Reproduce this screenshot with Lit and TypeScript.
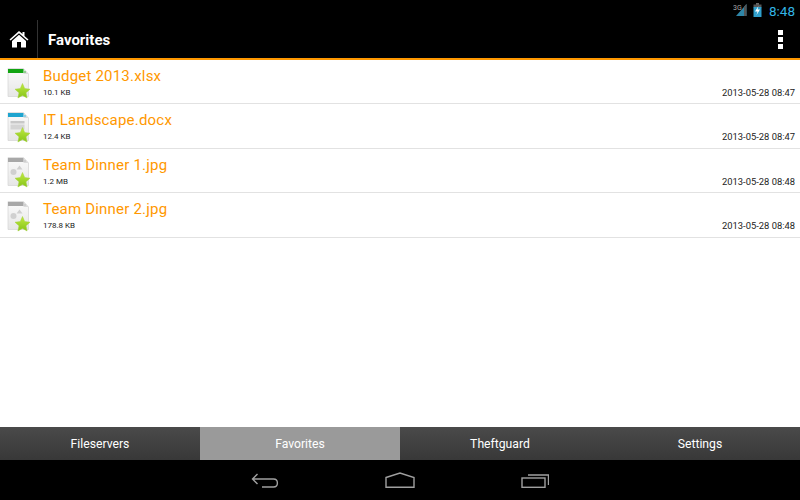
import { LitElement, html, css, svg } from "lit";
import { customElement } from "lit/decorators.js";

const fileIcon = (kind: string) => html`
<svg class="ficon" width="26" height="32" viewBox="0 0 26 32">
  <defs>
    <linearGradient id="pg-${kind}" x1="0" y1="0" x2="0" y2="1"><stop offset="0" stop-color="#fbfbfb"/><stop offset="1" stop-color="#e6e6e6"/></linearGradient>
    <linearGradient id="st-${kind}" x1="0" y1="0" x2="0" y2="1"><stop offset="0" stop-color="#c0ea40"/><stop offset="1" stop-color="#86c41a"/></linearGradient>
  </defs>
  <path d="M1 0.5H16.5L21.5 6V28.5H1Z" fill="url(#pg-${kind})" stroke="#d8d8d8" stroke-width=".8"/>
  <path d="M16.5 1V6H21.5Z" fill="#dcdcdc"/>
  ${kind === "xlsx" ? svg`<rect x="1" y="1" width="15.5" height="4" fill="#12a412"/><rect x="16.5" y="3" width="2.5" height="2" fill="#8fd08f"/>` : ""}
  ${kind === "docx" ? svg`<rect x="1" y="1" width="15.5" height="4" fill="#1ea4cf"/><rect x="16.5" y="3" width="2.5" height="2" fill="#8fcfe4"/><rect x="3.5" y="9" width="14" height="2.5" fill="#c8c8c8"/><rect x="3.5" y="12.5" width="14" height="5" fill="#d4d4d4"/>` : ""}
  ${kind === "jpg" ? svg`<rect x="1" y="1" width="15.5" height="4" fill="#a8a8a8"/><rect x="16.5" y="3" width="2.5" height="2" fill="#cfcfcf"/><circle cx="6.5" cy="15" r="3" fill="#d0d0d0"/><path d="M12.5 8.5L15.5 12.5H9.5Z" fill="#d0d0d0"/>` : ""}
  <path d="M15.5 15.5L17.7 20.6L23 21.2L19 24.8L20.1 30L15.5 27.4L10.9 30L12 24.8L8 21.2L13.3 20.6Z" fill="url(#st-${kind})" stroke="#a4d03c" stroke-width=".5"/>
</svg>`;

const files = [
  { name: "Budget 2013.xlsx", size: "10.1 KB", date: "2013-05-28 08:47", kind: "xlsx" },
  { name: "IT Landscape.docx", size: "12.4 KB", date: "2013-05-28 08:47", kind: "docx" },
  { name: "Team Dinner 1.jpg", size: "1.2 MB", date: "2013-05-28 08:48", kind: "jpg" },
  { name: "Team Dinner 2.jpg", size: "178.8 KB", date: "2013-05-28 08:48", kind: "jpg" },
];

@customElement("app-root")
export class AppRoot extends LitElement {
  static styles = css`
    :host { display: flex; flex-direction: column; width: 800px; height: 500px; font-family: Roboto, sans-serif; background: #fff; overflow: hidden; }
    .status { height: 20px; background: #000; display: flex; align-items: center; justify-content: flex-end; padding-right: 5px; flex: none; }
    .status svg { margin-right: 5px; }
    .status svg + svg { margin-right: 7px; }
    .clock { color: #33b5e5; font-size: 13.5px; line-height: 20px; padding-top: 2px; }
    .bar { height: 38px; background: #000; border-bottom: 2px solid #ff9800; display: flex; align-items: center; flex: none; }
    .home { width: 37px; height: 38px; display: flex; align-items: center; justify-content: center; border-right: 1px solid #333; box-sizing: content-box; }
    .title { color: #fff; font-weight: 700; font-size: 15px; margin-left: 10px; flex: 1; padding-top: 2px; }
    .menu { width: 7px; display: flex; flex-direction: column; gap: 2px; margin-right: 15px; }
    .menu i { display: block; width: 5px; height: 5px; background: #fff; }
    .list { flex: 1; display: flex; flex-direction: column; }
    .row { height: 43.4px; border-bottom: 1px solid #e2e2e2; display: flex; align-items: stretch; box-sizing: content-box; flex: none; }
    .ficon { flex: none; margin: 8px 0 0 7px; }
    .body { flex: 1; margin-left: 10px; padding-right: 5px; display: flex; flex-direction: column; padding-top: 6px; }
    .name { color: #ff9800; font-size: 15px; line-height: 20px; letter-spacing: 0.2px; }
    .meta { display: flex; justify-content: space-between; align-items: center; font-size: 8px; line-height: 12px; color: #222; margin-top: 1px; }
    .date { font-size: 9.4px; }
    .tabs { height: 33px; display: flex; flex: none; background: linear-gradient(#4a4a4a, #383838); }
    .tab { flex: 1; display: flex; align-items: center; justify-content: center; color: #fff; font-size: 12.2px; }
    .tab.on { background: #9a9a9a; }
    .nav { height: 40px; background: #000; display: flex; justify-content: center; align-items: center; flex: none; gap: 106px; }
  `;

  render() {
    return html`
      <div class="status">
        <svg width="15" height="14" viewBox="0 0 15 14">
          <path d="M3 13L13.5 1V13Z" fill="#2f86a8"/>
          <path d="M11 3.8V13H13.5V1Z" fill="#555"/>
          <text x="0" y="6.5" font-size="7" fill="#aaa" font-family="Roboto">3G</text>
        </svg>
        <svg width="9" height="14" viewBox="0 0 9 14">
          <rect x="3" y="0" width="3" height="2" fill="#666"/>
          <rect x="0.5" y="1.5" width="8" height="3" fill="#555"/>
          <rect x="0.5" y="4" width="8" height="10" fill="#2f9fcb"/>
          <path d="M5.5 3L2 8.5H4.5L3.5 12L7 6.5H4.5Z" fill="#fff"/>
        </svg>
        <span class="clock">8:48</span>
      </div>
      <div class="bar">
        <div class="home">
          <svg width="20" height="18" viewBox="0 0 20 18">
            <path d="M10 1L0.5 9.5L1.6 10.6L10 3.2L18.4 10.6L19.5 9.5L15.5 5.9V2H13.5V4.1Z" fill="#fff"/>
            <path d="M3 11V17.5H8V12H12V17.5H17V11L10 4.8Z" fill="#fff"/>
          </svg>
        </div>
        <div class="title">Favorites</div>
        <div class="menu"><i></i><i></i><i></i></div>
      </div>
      <div class="list">
        ${files.map(f => html`
          <div class="row">
            ${fileIcon(f.kind)}
            <div class="body">
              <div class="name">${f.name}</div>
              <div class="meta"><span>${f.size}</span><span class="date">${f.date}</span></div>
            </div>
          </div>`)}
      </div>
      <div class="tabs">
        <div class="tab">Fileservers</div>
        <div class="tab on">Favorites</div>
        <div class="tab">Theftguard</div>
        <div class="tab">Settings</div>
      </div>
      <div class="nav">
        <svg width="28" height="16" viewBox="0 0 28 16" fill="none" stroke="#a0a0a0" stroke-width="1.4">
          <path d="M6.5 2L1.5 7L6.5 12M1.5 7H22.5C27.7 7 27.7 15 22.5 15H11"/>
        </svg>
        <svg width="30" height="16" viewBox="0 0 30 16" fill="none" stroke="#a0a0a0" stroke-width="1.4">
          <path d="M1 5.5L15 1L29 5.5V15.3H1Z"/>
        </svg>
        <svg width="28" height="16" viewBox="0 0 28 16" fill="none" stroke="#a0a0a0" stroke-width="1.4">
          <rect x="1" y="6" width="23" height="9.3"/>
          <path d="M7 3H27.5V13"/>
        </svg>
      </div>
    `;
  }
}
